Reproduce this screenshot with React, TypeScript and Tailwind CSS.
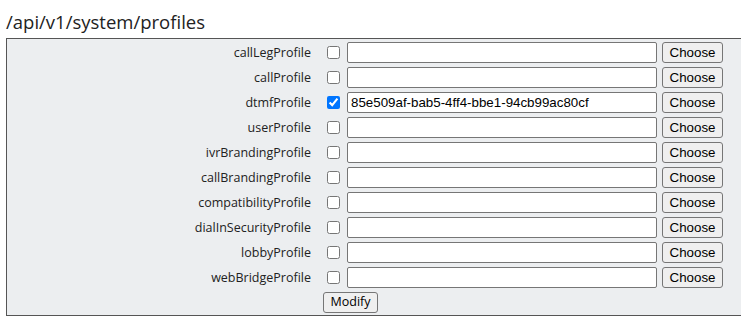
import { useState } from "react";

const profiles = [
  "callLegProfile",
  "callProfile",
  "dtmfProfile",
  "userProfile",
  "ivrBrandingProfile",
  "callBrandingProfile",
  "compatibilityProfile",
  "dialInSecurityProfile",
  "lobbyProfile",
  "webBridgeProfile",
];

const initial: Record<string, string> = {
  dtmfProfile: "85e509af-bab5-4ff4-bbe1-94cb99ac80cf",
};

export default function App() {
  const [values, setValues] = useState<Record<string, string>>(initial);
  const [checked, setChecked] = useState<Record<string, boolean>>({ dtmfProfile: true });

  return (
    <div className="w-[741px] h-[326px] overflow-hidden bg-white text-[#222] font-['Open_Sans',sans-serif]">
      <h1 className="pl-[6px] pt-[9px] h-[38px] text-[18.5px] leading-[26px]">/api/v1/system/profiles</h1>
      <div className="ml-[6px] w-[780px] border border-[#555] bg-[#eceef0] pt-[1px]">
        {profiles.map((name) => (
          <div key={name} className="flex items-center h-[25px]">
            <label className="w-[304px] text-right text-[12.5px] leading-[18px]">{name}</label>
            <input
              type="checkbox"
              checked={!!checked[name]}
              onChange={(e) => setChecked({ ...checked, [name]: e.currentTarget.checked })}
              className="ml-[16px] m-0 w-[13px] h-[13px]"
            />
            <input
              type="text"
              value={values[name] ?? ""}
              onChange={(e) => setValues({ ...values, [name]: e.currentTarget.value })}
              className="ml-[7px] w-[310px] h-[21px] px-[3px] bg-white border border-[#767676] rounded-[2px] font-['Liberation_Sans',sans-serif] text-[13.33px] text-black"
            />
            <button className="ml-[5px] w-[61px] h-[21px] bg-[#efefef] border border-[#767676] rounded-[3px] font-['Liberation_Sans',sans-serif] text-[13.33px] text-black">
              Choose
            </button>
          </div>
        ))}
        <div className="flex items-center h-[25px]">
          <button className="ml-[316px] w-[55px] h-[21px] bg-[#efefef] border border-[#767676] rounded-[3px] text-[12.5px] text-black">
            Modify
          </button>
        </div>
      </div>
    </div>
  );
}
